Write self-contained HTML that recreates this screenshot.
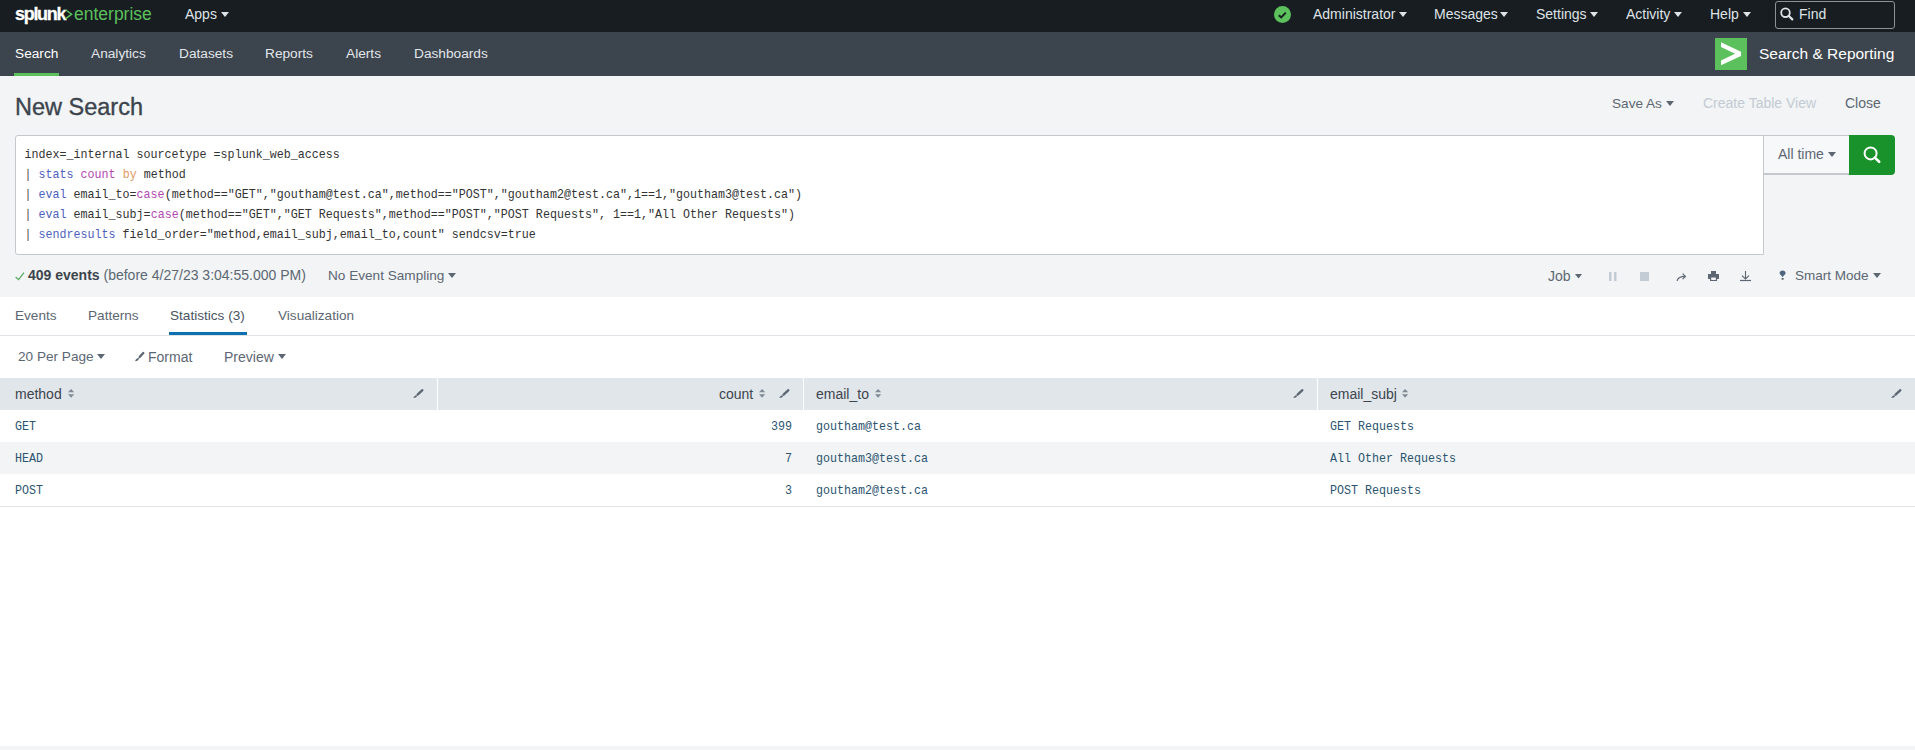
<!DOCTYPE html>
<html><head><meta charset="utf-8">
<style>
*{box-sizing:border-box;margin:0;padding:0}
html,body{width:1915px;height:750px;overflow:hidden;background:#fff;font-family:"Liberation Sans",sans-serif;font-size:14px;color:#3c444d}
.a{position:absolute;white-space:nowrap;font-size:14px;line-height:16px}
svg{position:absolute;overflow:visible}
#top{position:absolute;left:0;top:0;width:1915px;height:32px;background:#171d21}
#appbar{position:absolute;left:0;top:32px;width:1915px;height:44px;background:#3c444d}
#page{position:absolute;left:0;top:76px;width:1915px;height:221px;background:#f2f4f5}
.ti{color:#dfe3e7;top:6px}
.nv{color:#e2e6ea;top:46px;font-size:13.7px}
.g{color:#5c6773}
.m{position:absolute;white-space:pre;font-family:"Liberation Mono",monospace;font-size:11.68px;line-height:14px;transform:scaleY(1.14);transform-origin:0 11px}
.m{margin-top:1px}
.cl{left:24.5px;color:#333}
.cmd{color:#4e5fbd}.fn{color:#b348b0}.kw{color:#e29a61}.pp{color:#5c3e4f}
.tab{top:308px;color:#5c6773;font-size:13.6px}
.th{top:386px;color:#3c444d}
.td{color:#2c5470}
</style></head><body>
<div id="top"></div>
<div id="appbar"></div>
<div id="page"></div>

<!-- logo -->
<div class="a" style="left:15px;top:2px;font-size:18px;line-height:24px;color:#fff;font-weight:bold;letter-spacing:-1.3px;-webkit-text-stroke:0.3px #fff">splunk</div>
<svg style="left:65px;top:9px" width="8" height="11"><path d="M0.8 1L6.6 5.2L0.8 9.6" stroke="#5cc05c" stroke-width="1.5" fill="none"/></svg>
<div class="a" style="left:74px;top:2px;font-size:17.5px;line-height:24px;color:#5cc05c">enterprise</div>

<div class="a ti" style="left:185px">Apps</div>
<svg style="left:221px;top:12px" width="8" height="5"><path d="M0 0H8L4 5Z" fill="#dfe3e7"/></svg>

<!-- right top -->
<svg style="left:1274px;top:6px" width="17" height="17"><circle cx="8.5" cy="8.5" r="8.5" fill="#5cc05c"/><path d="M4.8 9.2L7.2 11.4L11.8 6.6" stroke="#171d21" stroke-width="2" fill="none"/></svg>
<div class="a ti" style="left:1313px">Administrator</div>
<svg style="left:1399px;top:12px" width="8" height="5"><path d="M0 0H8L4 5Z" fill="#dfe3e7"/></svg>
<div class="a ti" style="left:1434px">Messages</div>
<svg style="left:1500px;top:12px" width="8" height="5"><path d="M0 0H8L4 5Z" fill="#dfe3e7"/></svg>
<div class="a ti" style="left:1536px">Settings</div>
<svg style="left:1590px;top:12px" width="8" height="5"><path d="M0 0H8L4 5Z" fill="#dfe3e7"/></svg>
<div class="a ti" style="left:1626px">Activity</div>
<svg style="left:1674px;top:12px" width="8" height="5"><path d="M0 0H8L4 5Z" fill="#dfe3e7"/></svg>
<div class="a ti" style="left:1710px">Help</div>
<svg style="left:1743px;top:12px" width="8" height="5"><path d="M0 0H8L4 5Z" fill="#dfe3e7"/></svg>
<div style="position:absolute;left:1775px;top:1px;width:120px;height:28px;border:1px solid #8a929a;border-radius:3px"></div>
<svg style="left:1780px;top:7px" width="14" height="14"><circle cx="5.5" cy="5.7" r="4.3" stroke="#dfe3e7" stroke-width="1.8" fill="none"/><path d="M8.6 8.8L12.3 12.4" stroke="#dfe3e7" stroke-width="2.2" stroke-linecap="round"/></svg>
<div class="a ti" style="left:1799px">Find</div>

<!-- app bar -->
<div class="a nv" style="left:15px;color:#fff">Search</div>
<div style="position:absolute;left:14px;top:73px;width:45px;height:3px;background:#5cc05c"></div>
<div class="a nv" style="left:91px">Analytics</div>
<div class="a nv" style="left:179px">Datasets</div>
<div class="a nv" style="left:265px">Reports</div>
<div class="a nv" style="left:346px">Alerts</div>
<div class="a nv" style="left:414px">Dashboards</div>
<svg style="left:1715px;top:38px" width="32" height="32"><rect width="32" height="32" fill="#5cc05c"/><path d="M6 4.3L26 13.7L26 17.9L6 27.3L6 22.6L20 15.8L6 9Z" fill="#fff"/></svg>
<div class="a" style="left:1759px;top:44px;font-size:15.5px;line-height:20px;color:#fff">Search &amp; Reporting</div>

<!-- title -->
<div class="a" style="left:15px;top:93px;font-size:23.5px;line-height:28px;color:#3c444d;-webkit-text-stroke:0.35px #3c444d">New Search</div>
<div class="a g" style="left:1612px;top:96px;font-size:13.6px">Save As</div>
<svg style="left:1666px;top:101px" width="8" height="5"><path d="M0 0H8L4 5Z" fill="#5c6773"/></svg>
<div class="a" style="left:1703px;top:95px;color:#c3cbd4">Create Table View</div>
<div class="a g" style="left:1845px;top:95px">Close</div>

<!-- search box -->
<div style="position:absolute;left:15px;top:135px;width:1749px;height:120px;background:#fff;border:1px solid #c4c8cd;border-radius:3px 0 0 3px"></div>
<div class="m cl" style="top:147px">index=_internal sourcetype =splunk_web_access</div>
<div class="m cl" style="top:167px"><span class="pp">|</span> <span class="cmd">stats</span> <span class="fn">count</span> <span class="kw">by</span> method</div>
<div class="m cl" style="top:187px"><span class="pp">|</span> <span class="cmd">eval</span> email_to=<span class="fn">case</span>(method=="GET","goutham@test.ca",method=="POST","goutham2@test.ca",1==1,"goutham3@test.ca")</div>
<div class="m cl" style="top:207px"><span class="pp">|</span> <span class="cmd">eval</span> email_subj=<span class="fn">case</span>(method=="GET","GET Requests",method=="POST","POST Requests", 1==1,"All Other Requests")</div>
<div class="m cl" style="top:227px"><span class="pp">|</span> <span class="cmd">sendresults</span> field_order="method,email_subj,email_to,count" sendcsv=true</div>

<div style="position:absolute;left:1763px;top:135px;width:87px;height:40px;border:1px solid #c4c8cd;border-bottom:2px solid #c4c8cd;background:#f7f8fa"></div>
<div class="a g" style="left:1778px;top:146px">All time</div>
<svg style="left:1828px;top:152px" width="8" height="5"><path d="M0 0H8L4 5Z" fill="#5c6773"/></svg>
<div style="position:absolute;left:1849px;top:135px;width:46px;height:40px;background:#1a922c;border-radius:0 4px 4px 0"></div>
<svg style="left:1863px;top:146px" width="18" height="18"><circle cx="7.6" cy="7.4" r="6" stroke="#fff" stroke-width="2" fill="none"/><path d="M11.8 11.6L16.2 15.8" stroke="#fff" stroke-width="2.6" stroke-linecap="round"/></svg>

<!-- status -->
<svg style="left:15px;top:271px" width="10" height="10"><path d="M0.6 6L3.6 8.6L9 1.6" stroke="#55a862" stroke-width="1.2" fill="none"/></svg>
<div class="a g" style="left:28px;top:267px"><b style="color:#3c444d">409 events</b> (before 4/27/23 3:04:55.000 PM)</div>
<div class="a g" style="left:328px;top:268px;font-size:13.6px">No Event Sampling</div>
<svg style="left:448px;top:273px" width="8" height="5"><path d="M0 0H8L4 5Z" fill="#5c6773"/></svg>
<div class="a g" style="left:1548px;top:268px">Job</div>
<svg style="left:1575px;top:274px" width="7" height="5"><path d="M0 0H7L3.5 4.5Z" fill="#5c6773"/></svg>
<svg style="left:1609px;top:272px" width="8" height="9"><rect x="0" y="0" width="2.5" height="9" fill="#c3cbd4"/><rect x="5" y="0" width="2.5" height="9" fill="#c3cbd4"/></svg>
<svg style="left:1640px;top:272px" width="9" height="9"><rect width="9" height="9" fill="#c3cbd4"/></svg>
<svg style="left:1676px;top:272px" width="11" height="10"><path d="M1 8.8C1.8 6 4 4.4 9 4.4" stroke="#5c6773" stroke-width="1.2" fill="none"/><path d="M6.6 1.6L9.4 4.4L6.6 7.2" stroke="#5c6773" stroke-width="1.2" fill="none"/></svg>
<svg style="left:1708px;top:271px" width="11" height="10"><path d="M3 0H8V3H11V8H9V10H2V8H0V3H3Z" fill="#5c6773"/><rect x="3.2" y="6.5" width="4.6" height="2.5" fill="#f2f4f5"/></svg>
<svg style="left:1740px;top:271px" width="11" height="10"><path d="M5.5 0V8M2 4.6L5.5 8L9 4.6" stroke="#5c6773" stroke-width="1.1" fill="none"/><path d="M0 9.5H11" stroke="#5c6773" stroke-width="1.2"/></svg>
<svg style="left:1779px;top:270px" width="8" height="10"><path d="M3.6 7.4C2.8 5.6 0.6 4.8 0.6 3.1C0.6 1.4 2 0.4 3.6 0.4C5.2 0.4 6.6 1.4 6.6 3.1C6.6 4.8 4.4 5.6 3.6 7.4Z" fill="#4e6580"/><rect x="2.6" y="8.2" width="2" height="1.4" fill="#3c444d"/></svg>
<div class="a g" style="left:1795px;top:268px;font-size:13.5px">Smart Mode</div>
<svg style="left:1873px;top:273px" width="8" height="5"><path d="M0 0H8L4 5Z" fill="#5c6773"/></svg>

<!-- tabs -->
<div class="a tab" style="left:15px">Events</div>
<div class="a tab" style="left:88px">Patterns</div>
<div class="a tab" style="left:170px;color:#4a545f">Statistics (3)</div>
<div class="a tab" style="left:278px">Visualization</div>
<div style="position:absolute;left:169px;top:332px;width:78px;height:3px;background:#0d70b0"></div>
<div style="position:absolute;left:0;top:335px;width:1915px;height:1px;background:#dfe3e7"></div>

<div class="a g" style="left:18px;top:349px;font-size:13.6px">20 Per Page</div>
<svg style="left:97px;top:354px" width="8" height="5"><path d="M0 0H8L4 5Z" fill="#5c6773"/></svg>
<svg style="left:134px;top:351px" width="11" height="11"><path d="M9.3 2L5.6 6.1" stroke="#5c6773" stroke-width="2.3" stroke-linecap="round"/><path d="M4.6 6.9C3.2 6.9 1.8 7.8 1 10.2C3.2 10 4.7 9.2 5.1 7.5Z" fill="#5c6773"/></svg>
<div class="a g" style="left:148px;top:349px">Format</div>
<div class="a g" style="left:224px;top:349px">Preview</div>
<svg style="left:278px;top:354px" width="8" height="5"><path d="M0 0H8L4 5Z" fill="#5c6773"/></svg>

<!-- table -->
<div style="position:absolute;left:0;top:378px;width:1915px;height:32px;background:#e1e6eb"></div>
<div style="position:absolute;left:437px;top:378px;width:1px;height:32px;background:#fff"></div>
<div style="position:absolute;left:803px;top:378px;width:1px;height:32px;background:#fff"></div>
<div style="position:absolute;left:1317px;top:378px;width:1px;height:32px;background:#fff"></div>
<div class="a th" style="left:15px">method</div>
<div class="a th" style="left:719px">count</div>
<div class="a th" style="left:816px">email_to</div>
<div class="a th" style="left:1330px">email_subj</div>
<svg style="left:68px;top:388px" width="7" height="11"><path d="M0 4.2H6.2L3.1 1Z M0 6.2H6.2L3.1 9.8Z" fill="#7f8a95"/></svg>
<svg style="left:759px;top:388px" width="7" height="11"><path d="M0 4.2H6.2L3.1 1Z M0 6.2H6.2L3.1 9.8Z" fill="#7f8a95"/></svg>
<svg style="left:875px;top:388px" width="7" height="11"><path d="M0 4.2H6.2L3.1 1Z M0 6.2H6.2L3.1 9.8Z" fill="#7f8a95"/></svg>
<svg style="left:1402px;top:388px" width="7" height="11"><path d="M0 4.2H6.2L3.1 1Z M0 6.2H6.2L3.1 9.8Z" fill="#7f8a95"/></svg>
<svg style="left:413px;top:389px" width="10" height="10"><path d="M9.4 1.2L4.6 5.6" stroke="#5c6773" stroke-width="2.3" stroke-linecap="round"/><path d="M3.4 6.3C2 6.4 1.1 7.4 0.4 9C2.4 9 3.6 8.3 4.2 7.1Z" fill="#5c6773"/></svg>
<svg style="left:779px;top:389px" width="10" height="10"><path d="M9.4 1.2L4.6 5.6" stroke="#5c6773" stroke-width="2.3" stroke-linecap="round"/><path d="M3.4 6.3C2 6.4 1.1 7.4 0.4 9C2.4 9 3.6 8.3 4.2 7.1Z" fill="#5c6773"/></svg>
<svg style="left:1293px;top:389px" width="10" height="10"><path d="M9.4 1.2L4.6 5.6" stroke="#5c6773" stroke-width="2.3" stroke-linecap="round"/><path d="M3.4 6.3C2 6.4 1.1 7.4 0.4 9C2.4 9 3.6 8.3 4.2 7.1Z" fill="#5c6773"/></svg>
<svg style="left:1891px;top:389px" width="10" height="10"><path d="M9.4 1.2L4.6 5.6" stroke="#5c6773" stroke-width="2.3" stroke-linecap="round"/><path d="M3.4 6.3C2 6.4 1.1 7.4 0.4 9C2.4 9 3.6 8.3 4.2 7.1Z" fill="#5c6773"/></svg>

<div style="position:absolute;left:0;top:442px;width:1915px;height:32px;background:#f2f4f5"></div>
<div style="position:absolute;left:0;top:506px;width:1915px;height:1px;background:#dfe3e7"></div>
<div class="m td" style="left:15px;top:419px">GET</div>
<div class="m td" style="left:15px;top:451px">HEAD</div>
<div class="m td" style="left:15px;top:483px">POST</div>
<div class="m td" style="left:771px;top:419px">399</div>
<div class="m td" style="left:785px;top:451px">7</div>
<div class="m td" style="left:785px;top:483px">3</div>
<div class="m td" style="left:816px;top:419px">goutham@test.ca</div>
<div class="m td" style="left:816px;top:451px">goutham3@test.ca</div>
<div class="m td" style="left:816px;top:483px">goutham2@test.ca</div>
<div class="m td" style="left:1330px;top:419px">GET Requests</div>
<div class="m td" style="left:1330px;top:451px">All Other Requests</div>
<div class="m td" style="left:1330px;top:483px">POST Requests</div>

<div style="position:absolute;left:0;top:746px;width:1915px;height:4px;background:#f2f4f5"></div>
</body></html>
